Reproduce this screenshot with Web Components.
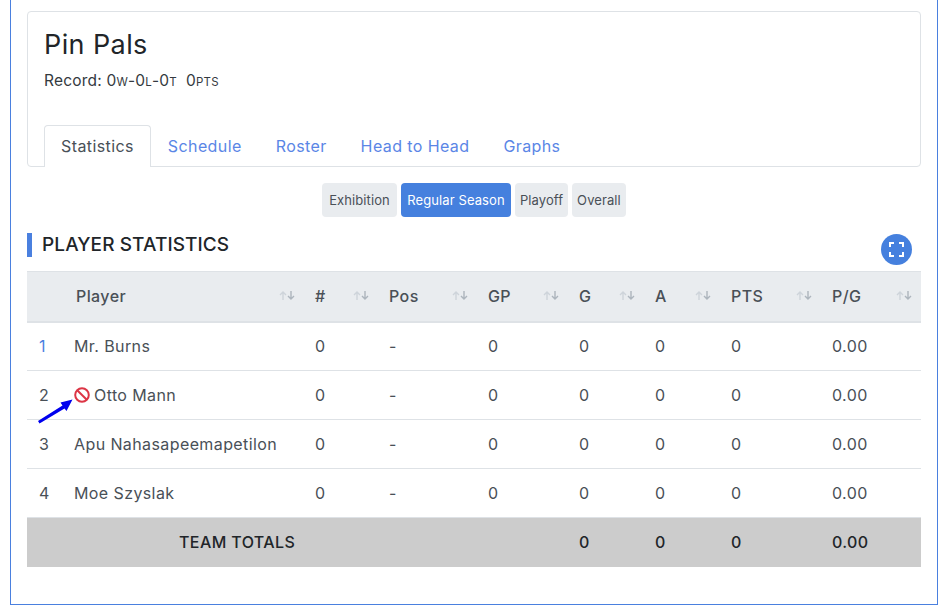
<!doctype html>
<html>
<head>
<meta charset="utf-8">
<title>Pin Pals</title>
<style>
  html, body { margin: 0; background: #fff; }
  body { font-family: Inter, "Liberation Sans", sans-serif; color: #212529; }
</style>
</head>
<body>
<team-page>
  <team-card name="Pin Pals">
    <tab-item active>Statistics</tab-item>
    <tab-item>Schedule</tab-item>
    <tab-item>Roster</tab-item>
    <tab-item>Head to Head</tab-item>
    <tab-item>Graphs</tab-item>
  </team-card>
  <season-filter>
    <season-btn w="75">Exhibition</season-btn>
    <season-btn w="110" active>Regular Season</season-btn>
    <season-btn w="53">Playoff</season-btn>
    <season-btn w="54">Overall</season-btn>
  </season-filter>
  <section-head>PLAYER STATISTICS</section-head>
  <stats-table></stats-table>
</team-page>

<script>
// page frame, blue hairline on three sides
class TeamPage extends HTMLElement {
  constructor() {
    super();
    this.attachShadow({ mode: 'open' }).innerHTML = `
      <style>
        :host {
          display: block; box-sizing: border-box;
          width: 928px; height: 605px; margin-left: 10px;
          padding: 11px 16px 0;
          border: 1px solid #4a80df; border-top: 0;
        }
      </style>
      <slot></slot>`;
  }
}

class TeamCard extends HTMLElement {
  constructor() {
    super();
    this.attachShadow({ mode: 'open' }).innerHTML = `
      <style>
        :host {
          display: block; box-sizing: border-box; height: 156px;
          border: 1px solid #dee2e6; border-radius: 4px;
          padding: 15px 15px 0 16px;
        }
        .wrap { display: flex; flex-direction: column; height: 100%; }
        h1 { margin: 0; font-size: 27px; line-height: 36px; font-weight: 400; color: #212529; letter-spacing: .4px; }
        .rec { margin-top: 6px; font-size: 15.5px; line-height: 24px; color: #343a40; letter-spacing: .2px; }
        .rec small { font-size: 11.5px; text-transform: uppercase; }
        nav { margin-top: auto; margin-bottom: -1px; display: flex; padding-left: 0; }
      </style>
      <div class="wrap">
        <h1></h1>
        <div class="rec">Record: 0<small>w</small>-0<small>l</small>-0<small>t</small>&nbsp; 0<small>pts</small></div>
        <nav><slot></slot></nav>
      </div>`;
    this.shadowRoot.querySelector('h1').textContent = this.getAttribute('name');
  }
}

class TabItem extends HTMLElement {
  constructor() {
    super();
    this.attachShadow({ mode: 'open' }).innerHTML = `
      <style>
        :host {
          display: block; box-sizing: border-box; height: 42px;
          padding: 8px 16px; line-height: 24px; font-size: 16px; letter-spacing: .4px;
          color: #5a86e6; border: 1px solid transparent; border-bottom: 0;
          border-radius: 4px 4px 0 0;
        }
        :host([active]) { color: #495057; background: #fff; border-color: #dee2e6; }
      </style>
      <slot></slot>`;
  }
}

class SeasonFilter extends HTMLElement {
  constructor() {
    super();
    this.attachShadow({ mode: 'open' }).innerHTML = `
      <style>
        :host { display: flex; justify-content: center; gap: 4px; margin-top: 16px; }
      </style>
      <slot></slot>`;
  }
}

class SeasonBtn extends HTMLElement {
  constructor() {
    super();
    this.attachShadow({ mode: 'open' }).innerHTML = `
      <style>
        :host {
          display: flex; align-items: center; justify-content: center;
          box-sizing: border-box; height: 34px; border-radius: 4px;
          background: #e9ecef; color: #495057; font-size: 13px; letter-spacing: .1px;
        }
        :host([active]) { background: #4580de; color: #fff; }
      </style>
      <slot></slot>`;
    this.style.width = this.getAttribute('w') + 'px';
  }
}

class SectionHead extends HTMLElement {
  constructor() {
    super();
    this.attachShadow({ mode: 'open' }).innerHTML = `
      <style>
        :host { display: flex; justify-content: space-between; margin-top: 16px; height: 38px; }
        .t {
          height: 24px; line-height: 24px; border-left: 5px solid #4a80df; padding-left: 10px;
          font-size: 19px; font-weight: 500; color: #212529; letter-spacing: .1px;
        }
        button {
          width: 31px; height: 31px; margin: 1px 9px 0 0; padding: 0; border: 0; border-radius: 50%;
          background: #4580de; display: flex; align-items: center; justify-content: center;
        }
      </style>
      <div class="t"><slot></slot></div>
      <button aria-label="Fullscreen">
        <svg width="15" height="15" viewBox="0 0 15 15" fill="none" stroke="#fff" stroke-width="2">
          <path d="M1 5V1h4M10 1h4v4M14 10v4h-4M5 14H1v-4"/>
        </svg>
      </button>`;
  }
}

const SORT = `<svg class="sort" width="16" height="9" viewBox="0 0 16 9" fill="none" stroke-width="1.4">
  <path stroke="#ced4da" d="M4 9V1M1 4l3-3 3 3"/>
  <path stroke="#adb5bd" d="M12 0v8M9 5l3 3 3-3"/>
</svg>`;

const COLS = [35, 242, 74, 99, 91, 76, 76, 101, 100];
const HEAD = ['', 'Player', '#', 'Pos', 'GP', 'G', 'A', 'PTS', 'P/G'];
const PLAYERS = [
  ['1', 'Mr. Burns'],
  ['2', 'Otto Mann', true],
  ['3', 'Apu Nahasapeemapetilon'],
  ['4', 'Moe Szyslak'],
];

class StatsTable extends HTMLElement {
  constructor() {
    super();
    const ban = `<svg class="ban" width="16" height="16" viewBox="0 0 16 16" fill="none" stroke="#dc3545" stroke-width="2"><circle cx="8" cy="8" r="6.8"/><path d="M3.2 3.2l9.6 9.6"/></svg>`;
    const arrow = `<svg class="arrow" width="38" height="28" viewBox="0 0 38 28"><path fill="#0000ee" d="M35.500 2.500 L23.500 5.500 L25.500 8.500 L1 24 L2.500 26.500 L27.500 11.500 L29.500 14 Z"/></svg>`;
    const rows = PLAYERS.map(([n, name, out]) => `<tr>
        <td class="n">${n}</td>
        <td class="p">${out ? ban + arrow : ''}${name}</td>
        <td>0</td><td>-</td><td>0</td><td>0</td><td>0</td><td>0</td><td>0.00</td>
      </tr>`).join('');
    this.attachShadow({ mode: 'open' }).innerHTML = `
      <style>
        :host { display: block; }
        table { width: 894px; border-collapse: collapse; table-layout: fixed; font-size: 16px; letter-spacing: .4px; }
        th, td { padding: 0 0 0 11px; text-align: left; }
        thead tr { height: 50px; background: #e9ecef; }
        th {
          font-weight: 500; color: #495057; border-top: 1px solid #dee2e6; border-bottom: 2px solid #dee2e6;
          position: relative;
        }
        th:nth-child(2) { padding-left: 14px; }
        .sort { position: absolute; right: 9px; top: 19px; }
        tbody tr { height: 49px; }
        td { color: #495057; border-bottom: 1px solid #dee2e6; }
        tbody tr:last-child td { border-bottom: 0; }
        td.n { padding-left: 12px; }
        td.n, td.p { color: #495057; }
        tr:first-child td.n { color: #4a80df; }
        td.p { position: relative; padding-left: 12px; }
        .ban { vertical-align: -2px; margin-right: 4px; }
        .arrow { position: absolute; left: -25px; top: 26px; }
        tfoot tr { height: 49px; background: #ccc; }
        tfoot td { color: #212529; font-weight: 500; border: 0; border-top: 1px solid #dee2e6; }
        tfoot .label { text-align: left; padding-left: 152px; }
      </style>
      <table>
        <colgroup>${COLS.map(w => `<col style="width:${w}px">`).join('')}</colgroup>
        <thead><tr>${HEAD.map((h, i) => `<th>${h}${i ? SORT : ''}</th>`).join('')}</tr></thead>
        <tbody>${rows}</tbody>
        <tfoot><tr>
          <td class="label" colspan="4">TEAM TOTALS</td>
          <td></td><td>0</td><td>0</td><td>0</td><td>0.00</td>
        </tr></tfoot>
      </table>`;
  }
}

customElements.define('team-page', TeamPage);
customElements.define('team-card', TeamCard);
customElements.define('tab-item', TabItem);
customElements.define('season-filter', SeasonFilter);
customElements.define('season-btn', SeasonBtn);
customElements.define('section-head', SectionHead);
customElements.define('stats-table', StatsTable);
</script>
</body>
</html>
